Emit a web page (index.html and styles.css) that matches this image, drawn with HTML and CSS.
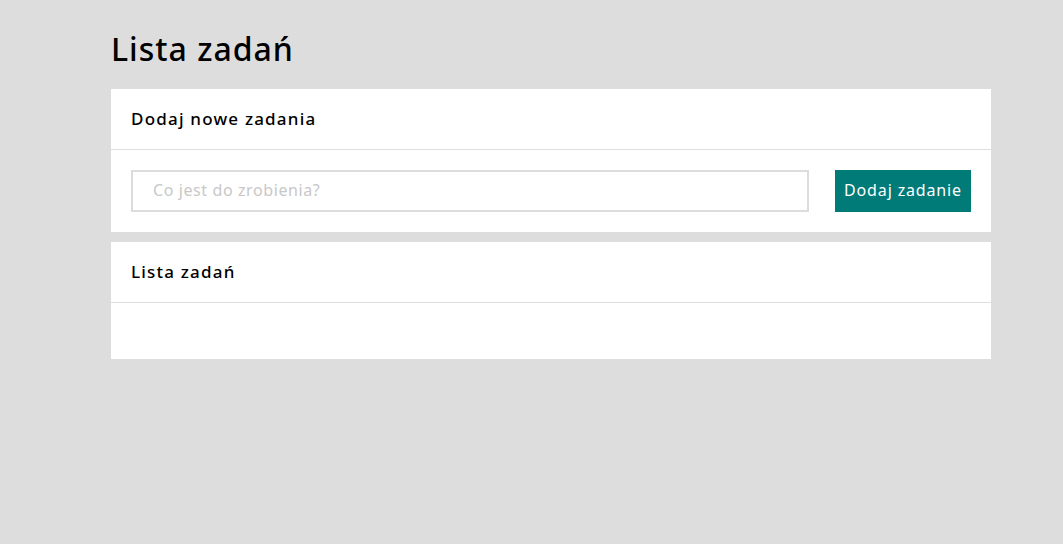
FILE: index.html
```html
<!DOCTYPE html>
<html lang="pl">
<head>
<meta charset="utf-8">
<title>Lista zadań</title>
<link rel="stylesheet" href="styles.css">
</head>
<body>
<main class="page">
  <h1 class="title">Lista zadań</h1>
  <section class="card">
    <header class="card-header">Dodaj nowe zadania</header>
    <form class="card-body add-form">
      <input class="task-input" type="text" placeholder="Co jest do zrobienia?">
      <button class="add-btn" type="button">Dodaj zadanie</button>
    </form>
  </section>
  <section class="card">
    <header class="card-header">Lista zadań</header>
    <div class="card-body list-body"></div>
  </section>
</main>
</body>
</html>
```

FILE: styles.css
```css
* { box-sizing: border-box; }
html, body {
  margin: 0;
  background: #dcdddc;
  font-family: "Noto Sans", "DejaVu Sans", sans-serif;
  color: #000;
}
.page {
  padding: 26px 72px 0 111px;
}
.title {
  margin: 0 0 18px;
  font-size: 32px;
  font-weight: 500;
  line-height: 45px;
  letter-spacing: 1px;
}
.card {
  background: #fff;
  margin-bottom: 10px;
}
.card-header {
  height: 61px;
  padding: 0 20px 2px;
  display: flex;
  align-items: center;
  font-size: 17px;
  font-weight: 500;
  letter-spacing: 1.2px;
  border-bottom: 1px solid #dedede;
}
.card-body {
  padding: 20px;
}
.add-form {
  display: flex;
  gap: 26px;
  margin: 0;
}
.task-input {
  flex: 1;
  height: 42px;
  border: 2px solid #dcdcdc;
  padding: 0 20px 2px;
  font-family: inherit;
  font-size: 16px;
  letter-spacing: 0.6px;
  outline: none;
}
.task-input::placeholder {
  color: #c8c8c8;
}
.add-btn {
  width: 136px;
  height: 42px;
  border: 0;
  background: #007b78;
  color: #fff;
  font-family: inherit;
  font-size: 16px;
  letter-spacing: 0.85px;
  padding: 0 0 2px;
}
.list-body {
  height: 56px;
}
```
